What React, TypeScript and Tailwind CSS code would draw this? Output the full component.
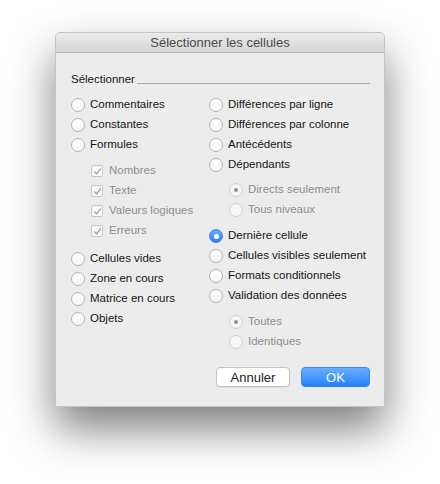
import React from "react";

type Item = { label: string; checked?: boolean; disabled?: boolean; mt?: string };

const Radio = ({ checked = false, disabled = false }: { checked?: boolean; disabled?: boolean }) => {
  if (checked && !disabled) {
    return (
      <span className="flex h-[14px] w-[14px] shrink-0 items-center justify-center rounded-full border border-[#3b82f0] bg-gradient-to-b from-[#6aaefc] to-[#2f7ff2]">
        <span className="h-[5px] w-[5px] rounded-full bg-white" />
      </span>
    );
  }
  return (
    <span
      className={
        disabled
          ? "flex h-[14px] w-[14px] shrink-0 items-center justify-center rounded-full border border-[#d2d2d2] bg-[#f6f6f6]"
          : "flex h-[14px] w-[14px] shrink-0 items-center justify-center rounded-full border border-[#b2b2b2] bg-gradient-to-b from-white to-[#f7f7f7]"
      }
    >
      {checked && <span className="h-[4px] w-[4px] rounded-full bg-[#8f8f8f]" />}
    </span>
  );
};

const Check = () => (
  <span className="flex h-[12px] w-[12px] shrink-0 items-center justify-center rounded-[2px] border border-[#cacaca] bg-[#f7f7f7]">
    <svg width="9" height="9" viewBox="0 0 9 9" fill="none">
      <path d="M1.6 4.8 L3.6 6.9 L7.4 1.8" stroke="#9a9a9a" strokeWidth="1.2" strokeLinecap="round" strokeLinejoin="round" />
    </svg>
  </span>
);

const RadioRow = ({ label, checked, disabled, mt = "" }: Item) => (
  <div className={`flex h-5 items-center gap-[5px] ${mt}`}>
    <Radio checked={checked} disabled={disabled} />
    <span className={disabled ? "text-[#8d8d8d]" : "text-[#161616]"}>{label}</span>
  </div>
);

const CheckRow = ({ label, mt = "" }: Item) => (
  <div className={`flex h-5 items-center gap-[6px] pl-5 ${mt}`}>
    <Check />
    <span className="text-[#8d8d8d]">{label}</span>
  </div>
);

export default function App() {
  return (
    <div className="min-h-[484px] w-[440px] bg-white pl-[55px] pt-[32px] font-['Liberation_Sans',Arial,sans-serif] text-[11.5px]">
      <div className="w-[330px] overflow-hidden rounded-t-[5px] border border-[#c4c4c4] bg-[#ececec] shadow-[0_22px_44px_rgba(0,0,0,0.5)]">
        <div className="flex h-[20px] items-center justify-center border-b border-[#b9b9b9] bg-gradient-to-b from-[#ebebeb] to-[#d5d5d5] text-[13px] text-[#4a4a4a]">
          Sélectionner les cellules
        </div>

        <div className="pl-[15px] pr-[14px] pt-[19px] pb-[19px]">
          <div className="flex h-4 items-center gap-[2px] text-[#161616]">
            <span>Sélectionner</span>
            <span className="mt-[6px] h-px flex-1 bg-[#a8a8a8]" />
          </div>

          <div className="mt-[7px] flex">
            <div className="flex w-[138px] flex-col">
              <RadioRow label="Commentaires" />
              <RadioRow label="Constantes" />
              <RadioRow label="Formules" />
              <CheckRow label="Nombres" mt="mt-[6px]" />
              <CheckRow label="Texte" />
              <CheckRow label="Valeurs logiques" />
              <CheckRow label="Erreurs" />
              <RadioRow label="Cellules vides" mt="mt-[8px]" />
              <RadioRow label="Zone en cours" />
              <RadioRow label="Matrice en cours" />
              <RadioRow label="Objets" />
            </div>
            <div className="flex flex-col">
              <RadioRow label="Différences par ligne" />
              <RadioRow label="Différences par colonne" />
              <RadioRow label="Antécédents" />
              <RadioRow label="Dépendants" />
              <div className="mt-[5px] flex flex-col pl-5">
                <RadioRow label="Directs seulement" checked disabled />
                <RadioRow label="Tous niveaux" disabled />
              </div>
              <RadioRow label="Dernière cellule" checked mt="mt-[6px]" />
              <RadioRow label="Cellules visibles seulement" />
              <RadioRow label="Formats conditionnels" />
              <RadioRow label="Validation des données" />
              <div className="mt-[6px] flex flex-col pl-5">
                <RadioRow label="Toutes" checked disabled />
                <RadioRow label="Identiques" disabled />
              </div>
            </div>
          </div>

          <div className="mt-[15px] flex justify-end gap-[11px] text-[13px]">
            <button className="h-5 w-[74px] rounded-[4px] border border-[#c2c2c2] bg-white text-[#1c1c1c] shadow-[0_1px_0_rgba(0,0,0,0.05)]">
              Annuler
            </button>
            <button className="h-5 w-[69px] rounded-[4px] border border-[#3f86f4] bg-gradient-to-b from-[#69b0fb] to-[#1f80fa] text-white">
              OK
            </button>
          </div>
        </div>
      </div>
    </div>
  );
}
